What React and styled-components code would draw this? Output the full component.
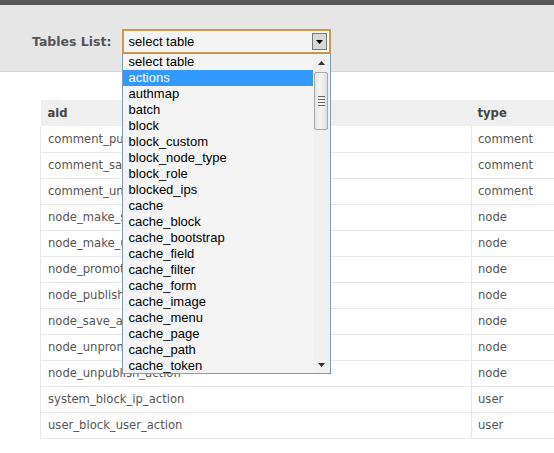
import React, { useState } from 'react';
import styled, { createGlobalStyle } from 'styled-components';

const GlobalStyle = createGlobalStyle`
  html, body {
    margin: 0;
    padding: 0;
    background: #fff;
    overflow: hidden;
  }
  body {
    font-family: "DejaVu Sans", Verdana, sans-serif;
  }
`;

const Page = styled.div`
  width: 554px;
  height: 453px;
  overflow: hidden;
`;

const TopBar = styled.div`
  height: 5px;
  background: #585858;
`;

const Header = styled.div`
  height: 67px;
  background: #e6e6e6;
  border-bottom: 1px solid #d6d6d6;
  display: flex;
  align-items: flex-start;
  padding: 24px 0 0 32px;
  box-sizing: border-box;
  gap: 10px;
`;

const Label = styled.label`
  font-size: 12.5px;
  font-weight: bold;
  color: #555;
  line-height: 25px;
`;

const SelectWrap = styled.div`
  position: relative;
  width: 209px;
`;

const SelectBox = styled.div`
  height: 25px;
  box-sizing: border-box;
  border: 2px solid #c99a4b;
  background: #f4f4f4;
  display: flex;
  align-items: center;
  justify-content: space-between;
  padding: 0 2px 0 5px;
  font-family: "Liberation Sans", Arial, sans-serif;
  font-size: 13px;
  color: #000;
`;

const ArrowButton = styled.div`
  width: 15px;
  height: 17px;
  box-sizing: border-box;
  border: 1px solid #777;
  background: #d8d8d8;
  display: flex;
  align-items: center;
  justify-content: center;
`;

const Dropdown = styled.div`
  position: absolute;
  top: 24px;
  left: 0;
  width: 209px;
  height: 321px;
  box-sizing: border-box;
  border: 1px solid #7f9db9;
  background: #f4f4f4;
  display: flex;
  z-index: 10;
`;

const Options = styled.ul`
  list-style: none;
  margin: 0;
  padding: 0;
  flex: 1;
  font-family: "Liberation Sans", Arial, sans-serif;
  font-size: 13px;
`;

const Option = styled.li`
  height: 16px;
  line-height: 16px;
  padding-left: 6px;
  color: ${p => (p.$active ? '#fff' : '#000')};
  background: ${p => (p.$active ? '#3399ff' : 'transparent')};
  white-space: nowrap;
`;

const Scrollbar = styled.div`
  width: 17px;
  background: #f0f0f0;
  display: flex;
  flex-direction: column;
  align-items: center;
`;

const ScrollArrow = styled.div`
  height: 17px;
  width: 17px;
  display: flex;
  align-items: center;
  justify-content: center;
`;

const Track = styled.div`
  flex: 1;
  width: 100%;
  display: flex;
  flex-direction: column;
  align-items: center;
`;

const Thumb = styled.div`
  width: 14px;
  height: 58px;
  box-sizing: border-box;
  margin-top: 1px;
  border: 1px solid #a9a9a9;
  border-radius: 2px;
  background: linear-gradient(to right, #e4e4e4, #f6f6f6 50%, #dcdcdc);
  display: flex;
  flex-direction: column;
  align-items: center;
  justify-content: center;
  gap: 2px;
`;

const Grip = styled.span`
  width: 7px;
  height: 1px;
  background: #666;
`;

const Table = styled.table`
  margin: 28px 0 0 40px;
  border-collapse: collapse;
  width: 560px;
  font-size: 11.6px;
  color: #555;
`;

const Th = styled.th`
  background: #efefef;
  text-align: left;
  font-weight: bold;
  color: #444;
  height: 26px;
  padding: 0 0 0 ${p => p.$pad || 7}px;
  width: ${p => p.$w || 'auto'};
  box-sizing: border-box;
`;

const Td = styled.td`
  height: 26px;
  padding: 0 0 0 ${p => p.$pad || 7}px;
  border-bottom: 1px solid #e8e8e8;
  border-left: 1px solid #e8e8e8;
  box-sizing: border-box;
  white-space: nowrap;
`;

const tables = [
  'select table', 'actions', 'authmap', 'batch', 'block', 'block_custom',
  'block_node_type', 'block_role', 'blocked_ips', 'cache', 'cache_block',
  'cache_bootstrap', 'cache_field', 'cache_filter', 'cache_form',
  'cache_image', 'cache_menu', 'cache_page', 'cache_path', 'cache_token',
];

const rows = [
  ['comment_publish_action', 'comment'],
  ['comment_save_action', 'comment'],
  ['comment_unpublish_action', 'comment'],
  ['node_make_sticky_action', 'node'],
  ['node_make_unsticky_action', 'node'],
  ['node_promote_action', 'node'],
  ['node_publish_action', 'node'],
  ['node_save_action', 'node'],
  ['node_unpromote_action', 'node'],
  ['node_unpublish_action', 'node'],
  ['system_block_ip_action', 'user'],
  ['user_block_user_action', 'user'],
];

const Triangle = ({ up, color = '#000', w = 7 }) => (
  <svg width={w} height={4} viewBox="0 0 7 4">
    <path d={up ? 'M0 4 L3.5 0 L7 4 Z' : 'M0 0 L7 0 L3.5 4 Z'} fill={color} />
  </svg>
);

export default function App() {
  const [active, setActive] = useState(1);

  return (
    <Page>
      <GlobalStyle />
      <TopBar />
      <Header>
        <Label>Tables List:</Label>
        <SelectWrap>
          <SelectBox>
            <span>select table</span>
            <ArrowButton>
              <Triangle />
            </ArrowButton>
          </SelectBox>
          <Dropdown>
            <Options>
              {tables.map((t, i) => (
                <Option key={t} $active={i === active} onMouseEnter={() => setActive(i)}>
                  {t}
                </Option>
              ))}
            </Options>
            <Scrollbar>
              <ScrollArrow>
                <Triangle up color="#333" />
              </ScrollArrow>
              <Track>
                <Thumb>
                  <Grip />
                  <Grip />
                  <Grip />
                  <Grip />
                </Thumb>
              </Track>
              <ScrollArrow>
                <Triangle color="#333" />
              </ScrollArrow>
            </Scrollbar>
          </Dropdown>
        </SelectWrap>
      </Header>
      <Table>
        <thead>
          <tr>
            <Th $w="431px">aid</Th>
            <Th $pad={6}>type</Th>
          </tr>
        </thead>
        <tbody>
          {rows.map(([aid, type]) => (
            <tr key={aid}>
              <Td>{aid}</Td>
              <Td $pad={6}>{type}</Td>
            </tr>
          ))}
        </tbody>
      </Table>
    </Page>
  );
}
